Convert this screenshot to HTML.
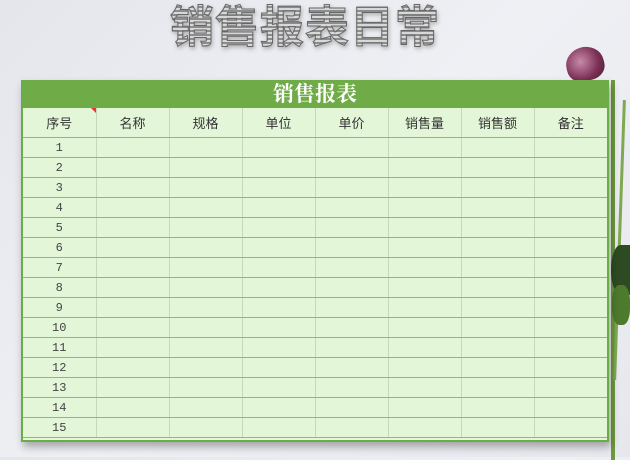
<!DOCTYPE html>
<html><head><meta charset="utf-8"><style>
body{margin:0;width:630px;height:457px;overflow:hidden;background:linear-gradient(135deg,#e4e6ec,#eef0f4 50%,#e6e8ee);font-family:"Liberation Sans","Noto Sans CJK SC",sans-serif;position:relative}
.title{position:absolute;left:170px;top:2px;font-size:44px;font-weight:bold;letter-spacing:1px;
 -webkit-text-stroke:1px #666;background:repeating-linear-gradient(#8c8c8c 0 2px,#d8d8d8 2px 4px);-webkit-background-clip:text;background-clip:text;color:transparent;line-height:52px;filter:drop-shadow(1px 2px 2px rgba(0,0,0,.25))}
.tbl{position:absolute;left:21px;top:80px;width:588px;height:362px;background:#e3f6d8;border-left:2px solid #6aad44;border-right:2px solid #6aad44;border-bottom:2px solid #6aad44;box-sizing:border-box;box-shadow:2px 5px 8px rgba(0,0,0,.3)}
.cap{height:28px;background:#6fab46;color:#fff;text-align:center;font:bold 21px/28px "Liberation Serif","Noto Serif CJK SC",serif}
table{border-collapse:collapse;width:100%;table-layout:fixed}
td{height:19px;border-bottom:1px solid #86c35e;border-right:1px solid #c5d8b8;text-align:center;font:12px "Liberation Mono","Noto Sans CJK SC",monospace;color:#444;padding:0}
tr.h td{height:29px;font-size:13px;font-family:"Liberation Sans","Noto Sans CJK SC",sans-serif;color:#333}
td:last-child{border-right:none}
</style></head><body>
<div class="title">销售报表日常</div>
<div style="position:absolute;left:611px;top:80px;width:4px;height:380px;background:#6e9a3e"></div>
<div style="position:absolute;left:618px;top:100px;width:3px;height:280px;background:#7fa850;transform:rotate(2deg)"></div>
<div style="position:absolute;left:611px;top:245px;width:19px;height:50px;background:#2e4a22;border-radius:60% 0 0 60%"></div>
<div style="position:absolute;left:612px;top:285px;width:18px;height:40px;background:#4e7a2e;border-radius:40%"></div>
<div style="position:absolute;left:566px;top:47px;width:38px;height:34px;border-radius:50% 50% 40% 40%;background:radial-gradient(circle at 40% 40%,#c98aa8,#7a2e55 60%,#4a2030);transform:rotate(-15deg)"></div>
<div class="tbl"><div class="cap">销售报表</div>
<table>
<tr class="h"><td style="position:relative">序号<span style="position:absolute;right:0;top:0;border-top:5px solid #e33;border-left:5px solid transparent"></span></td><td>名称</td><td>规格</td><td>单位</td><td>单价</td><td>销售量</td><td>销售额</td><td>备注</td></tr>
<tr><td>1</td><td></td><td></td><td></td><td></td><td></td><td></td><td></td></tr>
<tr><td>2</td><td></td><td></td><td></td><td></td><td></td><td></td><td></td></tr>
<tr><td>3</td><td></td><td></td><td></td><td></td><td></td><td></td><td></td></tr>
<tr><td>4</td><td></td><td></td><td></td><td></td><td></td><td></td><td></td></tr>
<tr><td>5</td><td></td><td></td><td></td><td></td><td></td><td></td><td></td></tr>
<tr><td>6</td><td></td><td></td><td></td><td></td><td></td><td></td><td></td></tr>
<tr><td>7</td><td></td><td></td><td></td><td></td><td></td><td></td><td></td></tr>
<tr><td>8</td><td></td><td></td><td></td><td></td><td></td><td></td><td></td></tr>
<tr><td>9</td><td></td><td></td><td></td><td></td><td></td><td></td><td></td></tr>
<tr><td>10</td><td></td><td></td><td></td><td></td><td></td><td></td><td></td></tr>
<tr><td>11</td><td></td><td></td><td></td><td></td><td></td><td></td><td></td></tr>
<tr><td>12</td><td></td><td></td><td></td><td></td><td></td><td></td><td></td></tr>
<tr><td>13</td><td></td><td></td><td></td><td></td><td></td><td></td><td></td></tr>
<tr><td>14</td><td></td><td></td><td></td><td></td><td></td><td></td><td></td></tr>
<tr><td>15</td><td></td><td></td><td></td><td></td><td></td><td></td><td></td></tr>
</table></div>
</body></html>
